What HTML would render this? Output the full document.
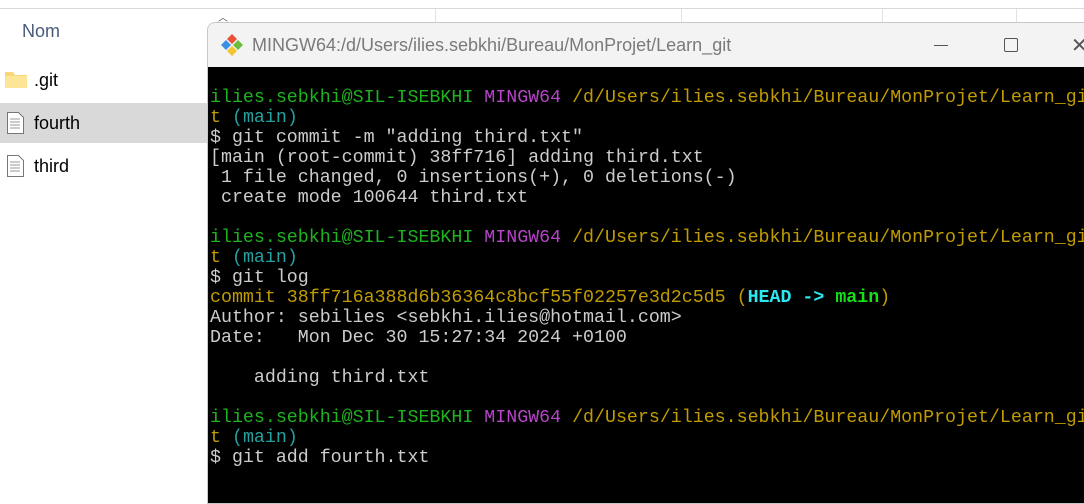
<html><head><style>
body{margin:0;width:1084px;height:489px;background:#fff;position:relative;overflow:hidden;font-family:"Liberation Sans",sans-serif}
.hdr{position:absolute;top:8px;left:0;width:1084px;height:1px;background:#d8d8d8}
.sep{position:absolute;top:9px;width:1px;height:14px;background:#e2e2e2}
.nom{position:absolute;left:22px;top:21px;font-size:18px;color:#4a5a7a}
.row{position:absolute;left:0;width:207px;height:40px;font-size:18px;color:#000}
.row span{position:absolute;left:34px;top:10px}
.sel{background:#d9d9d9}
.term{position:absolute;left:207px;top:22px;width:900px;height:480px;border:1px solid #c8c8c8;border-radius:8px 0 0 0;background:#f3f3f3;overflow:hidden}
.title{position:absolute;left:44px;top:12px;font-size:18px;color:#7a7a7a}
.black{position:absolute;left:0;top:44px;width:100%;height:440px;background:#000}
pre{margin:0;position:absolute;left:2px;top:21px;font-family:"Liberation Mono",monospace;font-size:18.3px;line-height:20px;color:#cccccc}
.g{color:#1fb21f}.p{color:#b545c6}.y{color:#c19c00}.c{color:#24a0a0}.bc{color:#2ee6f0;font-weight:bold}.bg{color:#16e016;font-weight:bold}
</style></head><body>
<div class="hdr"></div>
<div class="sep" style="left:435px"></div><div class="sep" style="left:681px"></div><div class="sep" style="left:882px"></div><div class="sep" style="left:1016px"></div>
<div style="position:absolute;left:218px;top:9px;font-size:10px;color:#555">︿</div>
<div class="nom">Nom</div>
<div class="row" style="top:60px"><svg style="position:absolute;left:5px;top:10px" width="22" height="18"><path d="M0 2h8l2 3h12v13H0z" fill="#f7d77a"/><path d="M0 6h22v12H0z" fill="#fde597"/></svg><span>.git</span></div>
<div class="row sel" style="top:103px"><svg style="position:absolute;left:7px;top:9px" width="17" height="22"><path d="M.5 .5h11l5 5v16H.5z" fill="#fff" stroke="#777"/><path d="M3 7h10M3 10h10M3 13h10M3 16h10" stroke="#999"/></svg><span>fourth</span></div>
<div class="row" style="top:146px"><svg style="position:absolute;left:7px;top:9px" width="17" height="22"><path d="M.5 .5h11l5 5v16H.5z" fill="#fff" stroke="#777"/><path d="M3 7h10M3 10h10M3 13h10M3 16h10" stroke="#999"/></svg><span>third</span></div>
<div class="term">
<svg style="position:absolute;left:12px;top:10px" width="24" height="24" viewBox="0 0 24 24"><path d="M12 1l5 5-5 5-5-5z" fill="#e8503a"/><path d="M6 7l5 5-5 5-5-5z" fill="#3b8ee8"/><path d="M18 7l5 5-5 5-5-5z" fill="#6dbd3c"/><path d="M12 13l5 5-5 5-5-5z" fill="#f5c431"/></svg>
<div class="title">MINGW64:/d/Users/ilies.sebkhi/Bureau/MonProjet/Learn_git</div>
<div style="position:absolute;left:726px;top:22px;width:14px;height:1px;background:#555"></div>
<div style="position:absolute;left:796px;top:15px;width:12px;height:12px;border:1px solid #555;border-radius:2px"></div>
<div style="position:absolute;left:863px;top:10px;font-size:20px;color:#555">✕</div>
<div class="black"><pre><span class="g">ilies.sebkhi@SIL-ISEBKHI</span> <span class="p">MINGW64</span> <span class="y">/d/Users/ilies.sebkhi/Bureau/MonProjet/Learn_git</span>
<span class="y">t</span> <span class="c">(main)</span>
$ git commit -m "adding third.txt"
[main (root-commit) 38ff716] adding third.txt
 1 file changed, 0 insertions(+), 0 deletions(-)
 create mode 100644 third.txt

<span class="g">ilies.sebkhi@SIL-ISEBKHI</span> <span class="p">MINGW64</span> <span class="y">/d/Users/ilies.sebkhi/Bureau/MonProjet/Learn_git</span>
<span class="y">t</span> <span class="c">(main)</span>
$ git log
<span class="y">commit 38ff716a388d6b36364c8bcf55f02257e3d2c5d5 (</span><span class="bc">HEAD -&gt; </span><span class="bg">main</span><span class="y">)</span>
Author: sebilies &lt;sebkhi.ilies@hotmail.com&gt;
Date:   Mon Dec 30 15:27:34 2024 +0100

    adding third.txt

<span class="g">ilies.sebkhi@SIL-ISEBKHI</span> <span class="p">MINGW64</span> <span class="y">/d/Users/ilies.sebkhi/Bureau/MonProjet/Learn_git</span>
<span class="y">t</span> <span class="c">(main)</span>
$ git add fourth.txt</pre></div>
</div>
</body></html>
